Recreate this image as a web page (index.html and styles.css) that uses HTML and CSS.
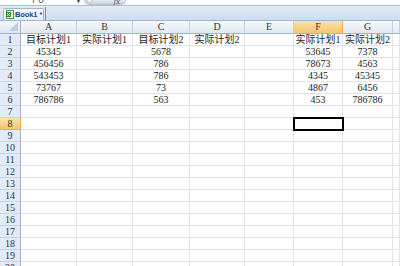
FILE: index.html
```html
<!DOCTYPE html>
<html>
<head>
<meta charset="utf-8">
<link rel="stylesheet" href="styles.css">
</head>
<body>
<div class="app">
  <div class="fbar">
    <div class="namebox">F8</div>
    <div class="nbarrow">▼</div>
    <div class="fxbtn"><span class="knob"></span><span class="fx">fx</span></div>
    <div class="fval"></div>
  </div>
  <div class="tabbar">
    <div class="tab">
      <svg class="xlicon" width="8" height="9" viewBox="0 0 8 9"><rect x="0.5" y="0.5" width="7" height="8" fill="#fff" stroke="#5b8a3c"/><rect x="0" y="2" width="5" height="5" fill="#2f7d32"/><path d="M1 3 L4 6 M4 3 L1 6" stroke="#fff" stroke-width="0.9"/></svg>
      <span class="tabname">Book1 *</span>
    </div>
    <div class="tabsep"></div>
  </div>
  <div class="sheet">
    <div class="corner"><span class="tri"></span></div>
    <div class="ch">A</div><div class="ch">B</div><div class="ch">C</div><div class="ch">D</div><div class="ch">E</div><div class="ch hsel">F</div><div class="ch">G</div><div class="ch"></div>

    <div class="rh">1</div><div class="c">目标计划1</div><div class="c">实际计划1</div><div class="c">目标计划2</div><div class="c">实际计划2</div><div class="c"></div><div class="c">实际计划1</div><div class="c">实际计划2</div><div class="c"></div>
    <div class="rh">2</div><div class="c">45345</div><div class="c"></div><div class="c">5678</div><div class="c"></div><div class="c"></div><div class="c">53645</div><div class="c">7378</div><div class="c"></div>
    <div class="rh">3</div><div class="c">456456</div><div class="c"></div><div class="c">786</div><div class="c"></div><div class="c"></div><div class="c">78673</div><div class="c">4563</div><div class="c"></div>
    <div class="rh">4</div><div class="c">543453</div><div class="c"></div><div class="c">786</div><div class="c"></div><div class="c"></div><div class="c">4345</div><div class="c">45345</div><div class="c"></div>
    <div class="rh">5</div><div class="c">73767</div><div class="c"></div><div class="c">73</div><div class="c"></div><div class="c"></div><div class="c">4867</div><div class="c">6456</div><div class="c"></div>
    <div class="rh">6</div><div class="c">786786</div><div class="c"></div><div class="c">563</div><div class="c"></div><div class="c"></div><div class="c">453</div><div class="c">786786</div><div class="c"></div>
    <div class="rh">7</div><div class="c"></div><div class="c"></div><div class="c"></div><div class="c"></div><div class="c"></div><div class="c"></div><div class="c"></div><div class="c"></div>
    <div class="rh hsel">8</div><div class="c"></div><div class="c"></div><div class="c"></div><div class="c"></div><div class="c"></div><div class="c sel"></div><div class="c"></div><div class="c"></div>
    <div class="rh">9</div><div class="c"></div><div class="c"></div><div class="c"></div><div class="c"></div><div class="c"></div><div class="c"></div><div class="c"></div><div class="c"></div>
    <div class="rh">10</div><div class="c"></div><div class="c"></div><div class="c"></div><div class="c"></div><div class="c"></div><div class="c"></div><div class="c"></div><div class="c"></div>
    <div class="rh">11</div><div class="c"></div><div class="c"></div><div class="c"></div><div class="c"></div><div class="c"></div><div class="c"></div><div class="c"></div><div class="c"></div>
    <div class="rh">12</div><div class="c"></div><div class="c"></div><div class="c"></div><div class="c"></div><div class="c"></div><div class="c"></div><div class="c"></div><div class="c"></div>
    <div class="rh">13</div><div class="c"></div><div class="c"></div><div class="c"></div><div class="c"></div><div class="c"></div><div class="c"></div><div class="c"></div><div class="c"></div>
    <div class="rh">14</div><div class="c"></div><div class="c"></div><div class="c"></div><div class="c"></div><div class="c"></div><div class="c"></div><div class="c"></div><div class="c"></div>
    <div class="rh">15</div><div class="c"></div><div class="c"></div><div class="c"></div><div class="c"></div><div class="c"></div><div class="c"></div><div class="c"></div><div class="c"></div>
    <div class="rh">16</div><div class="c"></div><div class="c"></div><div class="c"></div><div class="c"></div><div class="c"></div><div class="c"></div><div class="c"></div><div class="c"></div>
    <div class="rh">17</div><div class="c"></div><div class="c"></div><div class="c"></div><div class="c"></div><div class="c"></div><div class="c"></div><div class="c"></div><div class="c"></div>
    <div class="rh">18</div><div class="c"></div><div class="c"></div><div class="c"></div><div class="c"></div><div class="c"></div><div class="c"></div><div class="c"></div><div class="c"></div>
    <div class="rh">19</div><div class="c"></div><div class="c"></div><div class="c"></div><div class="c"></div><div class="c"></div><div class="c"></div><div class="c"></div><div class="c"></div>
    <div class="rh">20</div><div class="c"></div><div class="c"></div><div class="c"></div><div class="c"></div><div class="c"></div><div class="c"></div><div class="c"></div><div class="c"></div>
  </div>
</div>
</body>
</html>
```
FILE: styles.css
```css
* { box-sizing: border-box; }
html, body { margin: 0; padding: 0; background: #fff; }
.app {
  width: 400px;
  height: 266px;
  overflow: hidden;
  font-family: "Liberation Serif", "Noto Sans CJK SC", serif;
}
.fbar {
  height: 6px;
  display: flex;
  align-items: flex-end;
  background: #fff;
  border-bottom: 1px solid #a9bfd6;
  overflow: hidden;
}
.namebox {
  width: 76px;
  height: 6px;
  font-family: "Liberation Sans", sans-serif;
  font-size: 10px;
  line-height: 2px;
  color: #666;
  text-align: center;
}
.nbarrow {
  width: 6px;
  font-size: 5px;
  line-height: 5px;
  height: 6px;
  color: #222;
  margin-right: 2px;
}
.fxbtn {
  width: 42px;
  height: 6px;
  display: flex;
  align-items: center;
  justify-content: flex-end;
  padding-right: 5px;
  background: linear-gradient(#eef1f5, #c9d2dd);
  border-radius: 0 0 5px 5px;
  border: 1px solid #b8c3d0;
  border-top: none;
  position: relative;
}
.knob {
  position: absolute;
  left: 1px;
  top: -3px;
  width: 7px;
  height: 7px;
  border-radius: 50%;
  background: #fafbfd;
  border: 1px solid #b0bccb;
}
.fx {
  font-family: "Liberation Serif", serif;
  font-style: italic;
  font-size: 9px;
  line-height: 1px;
  color: #555;
}
.fval { flex: 1; }
.tabbar {
  height: 15px;
  display: flex;
  align-items: flex-end;
  background: linear-gradient(#e2ebf6, #cddcef);
  border-bottom: 1px solid #9eb6ce;
}
.tab {
  margin-left: 3px;
  width: 41px;
  height: 12px;
  display: flex;
  align-items: center;
  gap: 1px;
  padding-left: 2px;
  background: linear-gradient(#fbfdff, #e3ecf7);
  border: 1px solid #9eb6ce;
  border-bottom: none;
  border-radius: 2px 2px 0 0;
}
.xlicon { flex: none; }
.tabname {
  font-family: "Liberation Sans", sans-serif;
  font-weight: bold;
  font-size: 7.5px;
  letter-spacing: -0.1px;
  color: #15428b;
  white-space: nowrap;
}
.tabsep {
  width: 1px;
  height: 13px;
  margin-left: 1px;
  background: #6f8fb5;
}
.sheet {
  display: grid;
  grid-template-columns: 21px 56px 56px 57px 55px 49px 49px 50px 7px;
  grid-template-rows: 13px;
  grid-auto-rows: 12px;
}
.corner {
  position: relative;
  background: linear-gradient(#f3f6fa, #dfe6ef);
  border-right: 1px solid #9eb6ce;
  border-bottom: 1px solid #9eb6ce;
}
.tri {
  position: absolute;
  right: 2px;
  bottom: 2px;
  width: 0;
  height: 0;
  border-left: 9px solid transparent;
  border-bottom: 9px solid #c2ccd8;
}
.ch {
  background: linear-gradient(#f7f9fc, #e2e8f0);
  border-right: 1px solid #c3cfdd;
  border-bottom: 1px solid #9eb6ce;
  font-size: 10px;
  line-height: 12px;
  text-align: center;
  color: #333;
}
.rh {
  background: #e3ebf6;
  border-right: 1px solid #9eb6ce;
  border-bottom: 1px solid #c5d4e6;
  font-size: 10px;
  line-height: 11px;
  text-align: center;
  color: #27354a;
}
.ch.hsel, .rh.hsel {
  background: linear-gradient(#fbe1ad, #f4c66e);
  border-right-color: #f2a84d;
  border-bottom-color: #f2a84d;
  color: #333;
}
.c {
  border-right: 1px solid #dfe3ea;
  border-bottom: 1px solid #dfe3ea;
  font-size: 10px;
  line-height: 11px;
  text-align: center;
  white-space: nowrap;
  color: #222;
}
.c.sel {
  position: relative;
  z-index: 1;
  outline: 2px solid #000;
  outline-offset: -1px;
}
```
